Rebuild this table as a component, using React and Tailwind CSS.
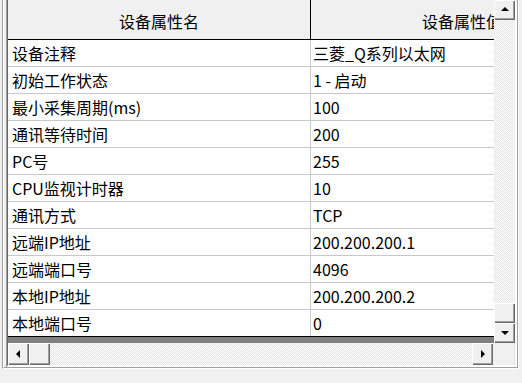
const rows = [
  ['设备注释', '三菱_Q系列以太网'],
  ['初始工作状态', '1 - 启动'],
  ['最小采集周期(ms)', '100'],
  ['通讯等待时间', '200'],
  ['PC号', '255'],
  ['CPU监视计时器', '10'],
  ['通讯方式', 'TCP'],
  ['远端IP地址', '200.200.200.1'],
  ['远端端口号', '4096'],
  ['本地IP地址', '200.200.200.2'],
  ['本地端口号', '0'],
];

const btn =
  'flex items-center justify-center bg-[#f0f0f0] shadow-[inset_1px_1px_0_#ffffff,inset_-1px_-1px_0_#696969,inset_-2px_-2px_0_#a0a0a0]';
const track =
  'bg-[image:repeating-conic-gradient(#ffffff_0_25%,#e4e4e4_0_50%)] bg-[length:2px_2px]';

function Up() {
  return <div className="w-0 h-0 border-x-[4px] border-x-transparent border-b-[4px] border-b-black" />;
}
function Down() {
  return <div className="w-0 h-0 border-x-[4px] border-x-transparent border-t-[4px] border-t-black" />;
}
function Left() {
  return <div className="w-0 h-0 border-y-[4px] border-y-transparent border-r-[4px] border-r-black" />;
}
function Right() {
  return <div className="w-0 h-0 border-y-[4px] border-y-transparent border-l-[4px] border-l-black" />;
}

export default function App() {
  return (
    <div className="w-[522px] h-[383px] bg-[#f0f0f0] pl-[2px] overflow-hidden font-['Noto_Sans_CJK_SC',sans-serif] text-black">
      {/* etched group frame */}
      <div className="w-[517px] h-[369px] border-l border-r border-b border-l-[#a0a0a0] border-r-white border-b-white">
        <div className="h-[368px] border-l border-r border-b border-l-white border-r-[#a0a0a0] border-b-[#a0a0a0] pl-[2px]">
          {/* sunken grid control */}
          <div className="w-[511px] h-[367px] border-l-2 border-r-2 border-b-2 border-l-[#696969] border-r-white border-b-white shadow-[inset_-1px_-1px_0_#e3e3e3]">
            <div className="h-[365px] border-l border-l-[#a0a0a0] -ml-[2px] pl-[1px] w-[508px]">
              <div className="flex w-[507px] h-[343px]">
                {/* table */}
                <div className="w-[486px] h-[343px] bg-[#808080] overflow-hidden">
                  <div className="w-[605px]">
                    <div className="flex h-[40px] bg-[#f0f0f0] border-b border-b-black text-[16px]">
                      <div className="w-[303px] shrink-0 border-r border-r-black flex items-center justify-center pt-[3px]">
                        设备属性名
                      </div>
                      <div className="w-[302px] shrink-0 flex items-center justify-center pt-[3px]">
                        设备属性值
                      </div>
                    </div>
                    {rows.map(([k, v], i) => (
                      <div
                        key={k}
                        className={
                          'flex h-[27px] bg-white text-[16px] leading-none border-b ' +
                          (i === rows.length - 1 ? 'border-b-black' : 'border-b-[#c8c8c8]')
                        }
                      >
                        <div className="w-[303px] shrink-0 border-r border-r-[#c8c8c8] flex items-center pl-[4px]">
                          {k}
                        </div>
                        <div className="w-[302px] shrink-0 flex items-center pl-[2px] whitespace-pre">{v}</div>
                      </div>
                    ))}
                  </div>
                </div>
                {/* vertical scrollbar */}
                <div className={'w-[21px] h-[343px] flex flex-col ' + track}>
                  <div className={btn + ' h-[20px] pb-[2px]'}>
                    <Up />
                  </div>
                  <div className="flex-1" />
                  <div className={btn + ' h-[20px]'} />
                  <div className={btn + ' h-[20px] pb-[1px]'}>
                    <Down />
                  </div>
                </div>
              </div>
              {/* horizontal scrollbar */}
              <div className="flex h-[22px]">
                <div className={'flex w-[486px] ' + track}>
                  <div className={btn + ' w-[21px] pr-[2px]'}>
                    <Left />
                  </div>
                  <div className={btn + ' w-[21px]'} />
                  <div className="flex-1" />
                  <div className={btn + ' w-[21px] pl-[1px]'}>
                    <Right />
                  </div>
                </div>
                <div className="w-[21px] bg-[#f0f0f0]" />
              </div>
            </div>
          </div>
        </div>
      </div>
    </div>
  );
}
